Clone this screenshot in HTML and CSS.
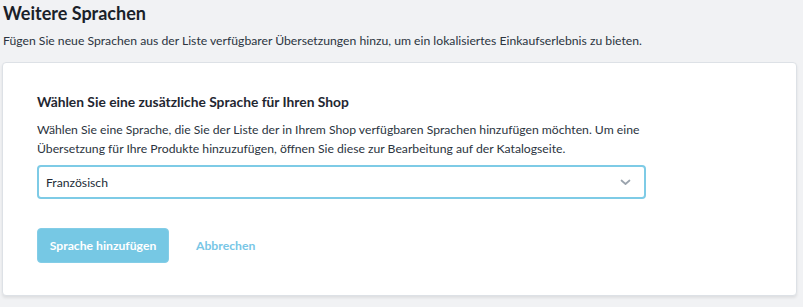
FILE: index.html
```html
<!DOCTYPE html>
<html lang="de">
<head>
<meta charset="utf-8">
<link rel="stylesheet" href="styles.css">
</head>
<body>
<header class="page-head">
  <h1 class="page-title">Weitere Sprachen</h1>
  <p class="page-sub">Fügen Sie neue Sprachen aus der Liste verfügbarer Übersetzungen hinzu, um ein lokalisiertes Einkaufserlebnis zu bieten.</p>
</header>
<section class="card">
  <h2 class="card-title">Wählen Sie eine zusätzliche Sprache für Ihren Shop</h2>
  <p class="card-desc">Wählen Sie eine Sprache, die Sie der Liste der in Ihrem Shop verfügbaren Sprachen hinzufügen möchten. Um eine Übersetzung für Ihre Produkte hinzuzufügen, öffnen Sie diese zur Bearbeitung auf der Katalogseite.</p>
  <div class="select">
    <span class="select-value">Französisch</span>
    <svg class="chevron" width="11" height="7" viewBox="0 0 11 7"><path d="M1.5 1.5 L5.5 5 L9.5 1.5" fill="none" stroke="#9aa3ad" stroke-width="1.7" stroke-linecap="round" stroke-linejoin="round"/></svg>
  </div>
  <div class="actions">
    <button class="btn-primary">Sprache hinzufügen</button>
    <a class="btn-link">Abbrechen</a>
  </div>
</section>
</body>
</html>
```
FILE: styles.css
```css
html, body {
  margin: 0;
  background: #f1f2f4;
}
body {
  font-family: Lato, "Open Sans", sans-serif;
  color: #222b36;
  width: 803px;
  height: 307px;
  overflow: hidden;
}
.page-head {
  padding: 0 3px;
}
.page-title {
  margin: 0;
  font-size: 18px;
  font-weight: 700;
  line-height: 26px;
  color: #1a2129;
}
.page-sub {
  margin: 3px 0 0;
  font-size: 12.2px;
  line-height: 24px;
  color: #2b3440;
}
.card {
  margin: 9px 6px 0 2px;
  background: #fff;
  border: 1px solid #dde1e6;
  border-radius: 4px;
  box-shadow: 0 2px 3px rgba(0, 0, 0, 0.08);
  padding: 28px 34px 32px;
  height: 234px;
  box-sizing: border-box;
}
.card-title {
  margin: 0;
  font-size: 13.8px;
  font-weight: 700;
  line-height: 22px;
  color: #1f2731;
}
.card-desc {
  margin: 7px 0 0;
  font-size: 12.2px;
  line-height: 19px;
  color: #2b3440;
  max-width: 612px;
}
.select {
  margin-top: 7px;
  width: 609px;
  height: 34px;
  box-sizing: border-box;
  border: 2px solid #7ecbe6;
  border-radius: 4px;
  display: flex;
  align-items: center;
  justify-content: space-between;
  padding: 0 13px 0 7px;
}
.select-value {
  font-size: 12.2px;
  color: #222b36;
}
.actions {
  margin-top: 29px;
  display: flex;
  align-items: center;
  gap: 27px;
}
.btn-primary {
  font-family: inherit;
  font-size: 12.2px;
  font-weight: 700;
  color: #fff;
  background: #76c8e4;
  border: 1px solid #83cde7;
  border-radius: 4px;
  height: 35px;
  width: 132px;
  padding: 0;
}
.btn-link {
  font-size: 12.2px;
  font-weight: 700;
  color: #78c6e6;
}
```
